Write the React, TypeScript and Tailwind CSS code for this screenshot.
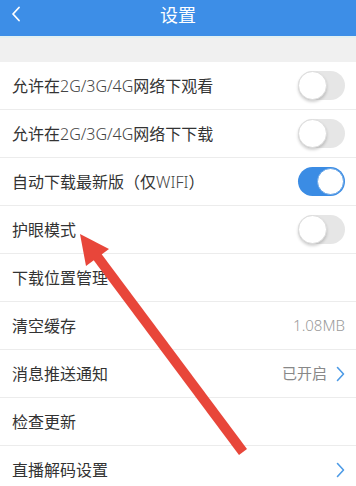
import React from "react";

const Toggle = ({ on }: { on: boolean }) =>
  on ? (
    <div className="relative w-[47px] h-[29px] rounded-full bg-[#3b8ce4]">
      <div className="absolute right-[1px] top-[1px] w-[27px] h-[27px] rounded-full bg-white border border-[#6aa6e6]" />
    </div>
  ) : (
    <div className="relative w-[47px] h-[29px] rounded-full bg-[#e6e6e6]">
      <div className="absolute left-0 top-0 w-[29px] h-[29px] rounded-full bg-white border border-[#dcdcdc] shadow-[0_2px_3px_rgba(0,0,0,0.18)]" />
    </div>
  );

const Chevron = () => (
  <svg width="9" height="16" viewBox="0 0 9 16" className="ml-[9px]">
    <path d="M1.5 1.5 L7.5 8 L1.5 14.5" fill="none" stroke="#4d9be6" strokeWidth="1.6" strokeLinecap="round" strokeLinejoin="round" />
  </svg>
);

const Label = ({ children }: { children: React.ReactNode }) => (
  <span className="text-[16px] text-[#333]">{children}</span>
);

const Latin = ({ children }: { children: React.ReactNode }) => (
  <span className="font-light text-[#444]">{children}</span>
);

const Row = ({ label, right }: { label: React.ReactNode; right?: React.ReactNode }) => (
  <div className="h-[48px] border-b border-[#ececec] flex items-center justify-between pl-[12px] pr-[11px] bg-white">
    <Label>{label}</Label>
    <div className="flex items-center">{right}</div>
  </div>
);

export default function App() {
  return (
    <div
      className="relative w-[356px] h-[486px] overflow-hidden bg-white"
      style={{ fontFamily: '"Noto Sans", "Noto Sans CJK SC", sans-serif' }}
    >
      <div className="h-[36px] bg-[#3d8ee7] flex items-center justify-center relative">
        <svg width="10" height="16" viewBox="0 0 10 16" className="absolute left-[11px] top-[6px]">
          <path d="M8 1.5 L2 8 L8 14.5" fill="none" stroke="white" strokeWidth="1.8" strokeLinecap="round" strokeLinejoin="round" />
        </svg>
        <span className="text-white text-[18px] -mt-[6px]">设置</span>
      </div>
      <div className="h-[2px] bg-[#e3f0f2]" />
      <div className="h-[24px] bg-[#f0f0f0]" />
      <Row label={<>允许在<Latin>2G/3G/4G</Latin>网络下观看</>} right={<Toggle on={false} />} />
      <Row label={<>允许在<Latin>2G/3G/4G</Latin>网络下下载</>} right={<Toggle on={false} />} />
      <Row label={<>自动下载最新版（仅<Latin>WIFI</Latin>）</>} right={<Toggle on={true} />} />
      <Row label="护眼模式" right={<Toggle on={false} />} />
      <Row label="下载位置管理" />
      <Row label="清空缓存" right={<span className="text-[15px] font-light text-[#9a9a9a]">1.08MB</span>} />
      <Row
        label="消息推送通知"
        right={
          <>
            <span className="text-[15px] text-[#888]">已开启</span>
            <Chevron />
          </>
        }
      />
      <Row label="检查更新" />
      <Row label="直播解码设置" right={<Chevron />} />

      <svg className="absolute left-0 top-0 pointer-events-none" width="356" height="486" viewBox="0 0 356 486">
        <polygon points="80,234 109,249 86,266" fill="#e8463a" />
        <line x1="96" y1="255" x2="243" y2="452" stroke="#e8463a" strokeWidth="10" />
      </svg>
    </div>
  );
}
